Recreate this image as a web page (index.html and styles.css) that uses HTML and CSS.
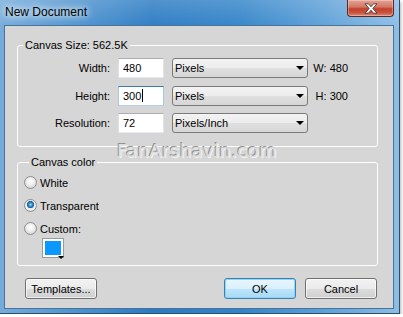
FILE: index.html
```html
<!DOCTYPE html>
<html lang="en">
<head>
  <meta charset="UTF-8">
  <title>New Document</title>
  <link rel="stylesheet" href="styles.css">
</head>
<body>
  <div class="window">
    <div class="titlebar">
      <span class="title">New Document</span>
      <button class="close" aria-label="Close">
        <svg width="14" height="11" viewBox="0 0 14 11"><path d="M1 0.8h3.5L7 3.8 9.5 0.8H13L8.9 5.5 13 10.2H9.5L7 7.2 4.5 10.2H1L5.1 5.5z" fill="#fff" stroke="#4a3030" stroke-width="0.9" stroke-linejoin="round"/></svg>
      </button>
    </div>

    <div class="client">
      <fieldset class="group size-group">
        <legend>Canvas Size: 562.5K</legend>
        <div class="size-grid">
          <span class="label">Width:</span>
          <div class="field">480</div>
          <div class="select">Pixels<span class="arrow"></span></div>
          <span class="dim">W: 480</span>

          <span class="label">Height:</span>
          <div class="field focused">300<span class="caret"></span></div>
          <div class="select">Pixels<span class="arrow"></span></div>
          <span class="dim">H: 300</span>

          <span class="label">Resolution:</span>
          <div class="field">72</div>
          <div class="select">Pixels/Inch<span class="arrow"></span></div>
          <span class="dim"></span>
        </div>
      </fieldset>

      <fieldset class="group color-group">
        <legend>Canvas color</legend>
        <label class="radio-row"><input type="radio" name="bg"> White</label>
        <label class="radio-row"><input type="radio" name="bg" checked> Transparent</label>
        <label class="radio-row"><input type="radio" name="bg"> Custom:</label>
        <div class="swatch"></div>
      </fieldset>

      <div class="buttons">
        <button class="btn">Templates...</button>
        <span class="spacer"></span>
        <button class="btn default">OK</button>
        <button class="btn">Cancel</button>
      </div>
    </div>

    <div class="watermark">FanArshavin.com</div>
  </div>
</body>
</html>
```

FILE: styles.css
```css
body {
  margin: 0;
  background: #fff;
  font-family: "Liberation Sans", Arial, sans-serif;
  font-size: 11px;
  color: #000;
}
.window {
  position: relative;
  box-sizing: border-box;
  width: 400px;
  height: 314px;
  display: flex;
  flex-direction: column;
  padding: 0 5px 4px 4px;
  border-right: 1px solid #2f4d69;
  border-bottom: 1px solid #2f4d69;
  background:
    linear-gradient(180deg, rgba(255,255,255,0.18), rgba(255,255,255,0) 10%),
    linear-gradient(90deg, #75acdb 0%, #4d92cf 20%, #2b7bc3 38%, #3284c8 60%, #5fa1d9 82%, #8cbde6 100%);
  box-shadow: 1px 2px 3px rgba(0,0,0,0.3);
}
.titlebar {
  height: 25px;
  display: flex;
  justify-content: space-between;
  align-items: flex-start;
}
.title {
  padding: 5px 0 0 1px;
  font-size: 12px;
  line-height: 14px;
  text-shadow: 0 0 6px #fff, 0 0 10px rgba(255,255,255,0.9);
}
/* close button */
.close {
  box-sizing: border-box;
  width: 47px;
  height: 17px;
  padding: 0;
  border: 1px solid #5a2a22;
  border-top: none;
  border-radius: 0 0 4px 4px;
  background: linear-gradient(180deg, #e4a394 0%, #d37a67 42%, #c2412c 55%, #c9533f 80%, #de8a74 100%);
  box-shadow: inset 0 0 0 1px rgba(255,255,255,0.3);
  display: flex;
  align-items: center;
  justify-content: center;
}
.client {
  flex: 1;
  background: #d6d6d6;
  border: 1px solid #4b7399;
  padding: 13px 0 0 12px;
  display: flex;
  flex-direction: column;
}
.group {
  box-sizing: border-box;
  width: 361px;
  min-width: 0;
  margin: 0;
  padding: 0;
  border: 1px solid #fff;
  border-radius: 3px;
}
.group legend {
  margin-left: 5px;
  padding: 0 2px;
  line-height: 13px;
}
.size-grid {
  display: grid;
  grid-template-columns: 92px 46px 136px 32px;
  grid-template-rows: repeat(3, 20px);
  column-gap: 8px;
  row-gap: 7.5px;
  align-items: center;
  padding: 6px 0 13px 0;
}
.label {
  text-align: right;
}
.field {
  box-sizing: border-box;
  height: 20px;
  padding: 0 4px;
  line-height: 18px;
  background: #fff;
  border: 1px solid;
  border-color: #abadb3 #e2e3ea #e3e9ef #dbdfe6;
}
.field.focused {
  border-color: #3d7bad #a4c9e3 #b5cfe7 #a4c9e3;
}
.caret {
  display: inline-block;
  width: 1px;
  height: 13px;
  margin-left: 1px;
  background: #000;
  vertical-align: -2px;
}
.select {
  box-sizing: border-box;
  height: 20px;
  padding: 0 2px;
  border: 1px solid #7a7a7a;
  border-radius: 3px;
  background: linear-gradient(180deg, #f3f3f3 0%, #ececec 50%, #e0e0e0 50%, #d6d6d6 100%);
  display: flex;
  align-items: center;
  justify-content: space-between;
}
.arrow {
  width: 0;
  height: 0;
  margin-right: 1px;
  border-left: 4px solid transparent;
  border-right: 4px solid transparent;
  border-top: 4px solid #000;
}
.dim {
  margin-left: -8px;
  text-align: right;
}
.color-group {
  margin-top: 9px;
  padding: 2px 0 7px 6px;
}
.radio-row {
  display: flex;
  align-items: center;
  gap: 3px;
  height: 23px;
}
.radio-row input {
  appearance: none;
  box-sizing: border-box;
  width: 13px;
  height: 13px;
  margin: 0;
  border: 1px solid #8e8f8f;
  border-radius: 50%;
  background: radial-gradient(circle at 50% 40%, #fff 0, #f2f2f2 3px, #d4d4d4 7px);
}
.radio-row input:checked {
  background: radial-gradient(circle at 50% 42%, #a9ddf8 0, #3a98d6 1.6px, #1b5f94 3.3px, #e6e6e6 3.9px, #f4f4f4 4.6px, #d4d4d4 7px);
}
.swatch {
  position: relative;
  box-sizing: border-box;
  width: 22px;
  height: 20px;
  margin: -2px 0 0 18px;
  border: 1px solid #9a9a9a;
  background: #0a97ff;
  box-shadow: inset 0 0 0 2px #fff;
}
.swatch::after {
  content: "";
  position: absolute;
  right: -1px;
  bottom: -2px;
  border-left: 3px solid transparent;
  border-right: 3px solid transparent;
  border-top: 3px solid #000;
}
.buttons {
  display: flex;
  gap: 9px;
  width: 361px;
  margin-top: 12px;
  padding: 0 1px 0 8px;
  box-sizing: border-box;
}
.spacer {
  flex: 1;
}
.btn {
  box-sizing: border-box;
  width: 72px;
  height: 21px;
  padding: 0;
  font: inherit;
  color: #000;
  border: 1px solid #707070;
  border-radius: 3px;
  background: linear-gradient(180deg, #f2f2f2 0%, #ebebeb 50%, #dddddd 50%, #cfcfcf 100%);
  box-shadow: inset 0 0 0 1px rgba(255,255,255,0.7);
}
.btn.default {
  border-color: #3c7fb1;
  background: linear-gradient(180deg, #eaf6fd 0%, #d9f0fc 50%, #bee6fd 50%, #a7d9f5 100%);
  box-shadow: inset 0 0 0 1px #8fd3f5;
}
/* watermark stamped over the dialog */
.watermark {
  position: absolute;
  left: 117px;
  top: 140px;
  font-family: "DejaVu Sans", sans-serif;
  font-size: 18px;
  letter-spacing: 0.4px;
  line-height: 22px;
  color: #dcdcdc;
  text-shadow: -1px -1px 0 #939393, 1px 1px 0 #f2f2f2;
  pointer-events: none;
}
```
